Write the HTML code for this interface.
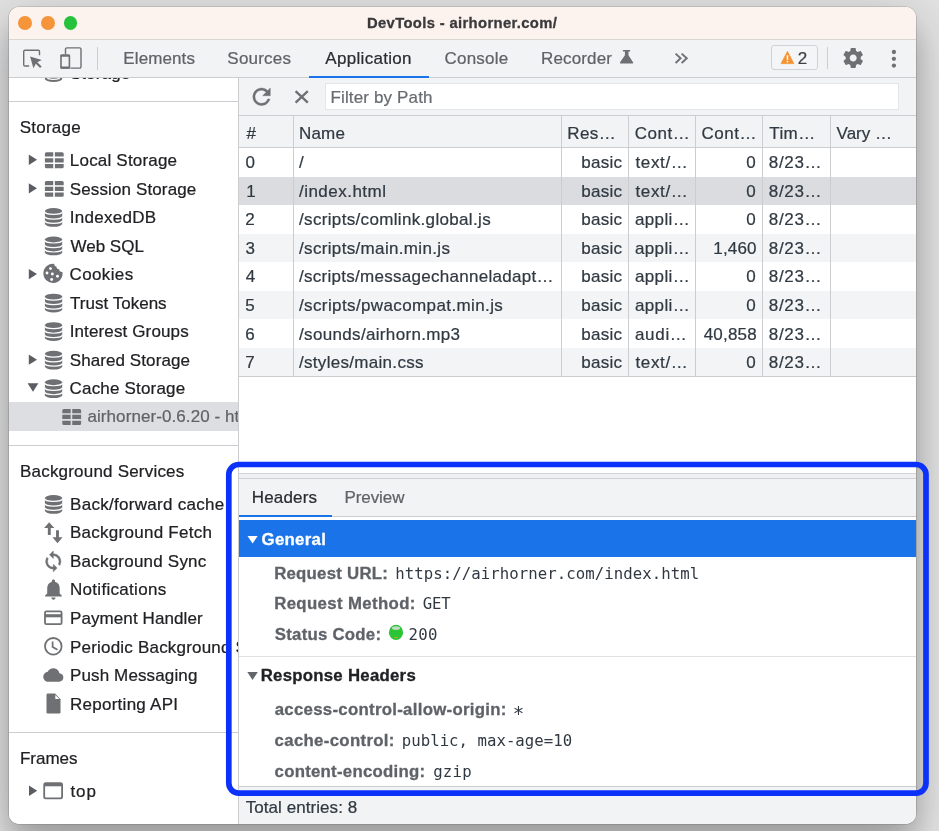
<!DOCTYPE html>
<html lang="en">
<head>
<meta charset="utf-8">
<title>DevTools - airhorner.com/</title>
<style>
html,body{margin:0;padding:0;}
body{width:939px;height:831px;overflow:hidden;position:relative;background:#dcdcdc;
  font-family:"Liberation Sans",sans-serif;}
#bg{position:absolute;left:0;top:0;width:939px;height:831px;
  background:#e2e2e2;}
#win{will-change:transform;position:absolute;left:9px;top:7px;width:907px;height:817px;border-radius:10px;background:#fff;
  box-shadow:0 0 0 0.6px rgba(0,0,0,.22),0 14px 50px rgba(0,0,0,.25),0 22px 24px rgba(0,0,0,.14);overflow:hidden;}
#win div{position:absolute;box-sizing:border-box;}
.t{position:absolute;white-space:pre;line-height:20px;-webkit-text-stroke:0.22px currentColor;}
.s{font-family:"Liberation Sans",sans-serif;}
.b{font-weight:bold;-webkit-text-stroke-width:0.3px;}
.m{font-family:"DejaVu Sans Mono","Liberation Mono",monospace;-webkit-text-stroke-width:0;}
svg{position:absolute;overflow:visible;}
</style>
</head>
<body>
<div id="bg"></div>
<div id="win">
<div  style="left:0.00px;top:0.00px;width:907.00px;height:32.50px;background:#fcf3ef;border-bottom:1px solid #d9d6d4;"></div>
<div  style="left:9.15px;top:9.25px;width:13.90px;height:13.90px;background:#f6943a;border-radius:50%;"></div>
<div  style="left:31.95px;top:9.25px;width:13.90px;height:13.90px;background:#f6943a;border-radius:50%;"></div>
<div  style="left:54.60px;top:9.25px;width:13.90px;height:13.90px;background:#27c23c;border-radius:50%;"></div>
<span class="t s b" style="left:358.00px;top:6.00px;font-size:14.8px;letter-spacing:0.348px;color:#3a3a3c;">DevTools - airhorner.com/</span>
<div  style="left:0.00px;top:32.50px;width:907.00px;height:38.50px;background:#f1f3f4;border-bottom:1px solid #cbcdd1;"></div>
<div  style="left:88.40px;top:40.40px;width:1.00px;height:22.20px;background:#cbcdd1;"></div>
<span class="t s" style="left:114.33px;top:41.50px;font-size:17.0px;letter-spacing:0.104px;color:#5f6368;">Elements</span>
<span class="t s" style="left:218.35px;top:41.50px;font-size:17.0px;letter-spacing:0.200px;color:#5f6368;">Sources</span>
<span class="t s" style="left:316.30px;top:41.50px;font-size:17.0px;letter-spacing:0.307px;color:#2a2c30;">Application</span>
<span class="t s" style="left:435.43px;top:41.50px;font-size:17.0px;letter-spacing:0.242px;color:#5f6368;">Console</span>
<span class="t s" style="left:532.12px;top:41.50px;font-size:17.0px;letter-spacing:0.121px;color:#5f6368;">Recorder</span>
<div  style="left:299.70px;top:68.60px;width:120.20px;height:2.40px;background:#1a73e8;"></div>
<div  style="left:762.40px;top:38.40px;width:46.60px;height:25.00px;border:1px solid #d0d2d5;border-radius:3px;background:#f4f5f6;"></div>
<span class="t s" style="left:788.83px;top:41.50px;font-size:17.0px;letter-spacing:0.200px;color:#3c4043;">2</span>
<div  style="left:817.80px;top:40.20px;width:1.00px;height:21.40px;background:#cbcdd1;"></div>
<div id="side" style="left:0;top:71px;width:229.9px;height:746px;overflow:hidden;background:#fff;">
<span class="t s" style="left:60.65px;top:-14.50px;font-size:17.0px;letter-spacing:0.200px;color:#202124;">Storage</span>
<div  style="left:0.00px;top:23.00px;width:230.00px;height:1.00px;background:#cbcdd1;"></div>
<span class="t s" style="left:10.65px;top:39.50px;font-size:17.0px;letter-spacing:0.246px;color:#202124;">Storage</span>
<div  style="left:0.00px;top:324.20px;width:230.00px;height:28.60px;background:#dcdee2;"></div>
<span class="t s" style="left:60.83px;top:72.50px;font-size:17.0px;letter-spacing:0.194px;color:#202124;">Local Storage</span>
<span class="t s" style="left:60.75px;top:101.50px;font-size:17.0px;letter-spacing:0.125px;color:#202124;">Session Storage</span>
<span class="t s" style="left:60.70px;top:129.50px;font-size:17.0px;letter-spacing:0.281px;color:#202124;">IndexedDB</span>
<span class="t s" style="left:61.38px;top:158.50px;font-size:17.0px;letter-spacing:0.029px;color:#202124;">Web SQL</span>
<span class="t s" style="left:60.62px;top:186.50px;font-size:17.0px;letter-spacing:0.354px;color:#202124;">Cookies</span>
<span class="t s" style="left:61.12px;top:215.50px;font-size:17.0px;letter-spacing:0.011px;color:#202124;">Trust Tokens</span>
<span class="t s" style="left:60.70px;top:243.50px;font-size:17.0px;letter-spacing:0.129px;color:#202124;">Interest Groups</span>
<span class="t s" style="left:60.75px;top:272.50px;font-size:17.0px;letter-spacing:0.083px;color:#202124;">Shared Storage</span>
<span class="t s" style="left:60.62px;top:300.50px;font-size:17.0px;letter-spacing:0.177px;color:#202124;">Cache Storage</span>
<span class="t s" style="left:78.45px;top:328.50px;font-size:17.0px;letter-spacing:0.083px;color:#5f6368;">airhorner-0.6.20 - https://airhorner.com</span>
<div  style="left:0.00px;top:367.00px;width:230.00px;height:1.00px;background:#cbcdd1;"></div>
<span class="t s" style="left:11.02px;top:383.50px;font-size:17.0px;letter-spacing:0.199px;color:#202124;">Background Services</span>
<span class="t s" style="left:61.03px;top:416.50px;font-size:17.0px;letter-spacing:0.291px;color:#202124;">Back/forward cache</span>
<span class="t s" style="left:61.03px;top:444.50px;font-size:17.0px;letter-spacing:0.260px;color:#202124;">Background Fetch</span>
<span class="t s" style="left:61.03px;top:473.50px;font-size:17.0px;letter-spacing:0.216px;color:#202124;">Background Sync</span>
<span class="t s" style="left:61.03px;top:501.50px;font-size:17.0px;letter-spacing:0.298px;color:#202124;">Notifications</span>
<span class="t s" style="left:61.03px;top:530.50px;font-size:17.0px;letter-spacing:0.089px;color:#202124;">Payment Handler</span>
<span class="t s" style="left:61.03px;top:559.50px;font-size:17.0px;letter-spacing:0.200px;color:#202124;">Periodic Background Sync</span>
<span class="t s" style="left:61.03px;top:587.50px;font-size:17.0px;letter-spacing:0.127px;color:#202124;">Push Messaging</span>
<span class="t s" style="left:61.03px;top:616.50px;font-size:17.0px;letter-spacing:0.260px;color:#202124;">Reporting API</span>
<div  style="left:0.00px;top:654.00px;width:230.00px;height:1.00px;background:#cbcdd1;"></div>
<span class="t s" style="left:10.93px;top:670.50px;font-size:17.0px;letter-spacing:-0.005px;color:#202124;">Frames</span>
<span class="t s" style="left:61.40px;top:703.50px;font-size:17.0px;letter-spacing:0.912px;color:#202124;">top</span>
</div>
<div  style="left:229.40px;top:71.00px;width:1.00px;height:746.00px;background:#cbcdd1;"></div>
<div  style="left:230.40px;top:71.00px;width:676.60px;height:37.60px;background:#f1f3f4;border-bottom:1px solid #cbcdd1;"></div>
<div  style="left:316.30px;top:75.50px;width:573.30px;height:27.70px;background:#fff;border:1px solid #e3e5e8;"></div>
<span class="t s" style="left:321.43px;top:80.50px;font-size:17.0px;letter-spacing:0.150px;color:#686c71;">Filter by Path</span>
<div  style="left:230.40px;top:108.60px;width:676.60px;height:32.40px;background:#f1f3f4;border-bottom:1px solid #cbcdd1;"></div>
<div  style="left:230.40px;top:169.55px;width:676.60px;height:28.55px;background:#dadce0;"></div>
<div  style="left:230.40px;top:226.65px;width:676.60px;height:28.55px;background:#f2f4f5;"></div>
<div  style="left:230.40px;top:283.75px;width:676.60px;height:28.55px;background:#f2f4f5;"></div>
<div  style="left:230.40px;top:340.85px;width:676.60px;height:28.55px;background:#f2f4f5;"></div>
<div  style="left:230.40px;top:368.90px;width:676.60px;height:1.00px;background:#cbcdd1;"></div>
<div  style="left:283.90px;top:108.60px;width:1.00px;height:260.80px;background:#cbcdd1;"></div>
<div  style="left:552.10px;top:108.60px;width:1.00px;height:260.80px;background:#cbcdd1;"></div>
<div  style="left:619.20px;top:108.60px;width:1.00px;height:260.80px;background:#cbcdd1;"></div>
<div  style="left:686.30px;top:108.60px;width:1.00px;height:260.80px;background:#cbcdd1;"></div>
<div  style="left:753.00px;top:108.60px;width:1.00px;height:260.80px;background:#cbcdd1;"></div>
<div  style="left:820.50px;top:108.60px;width:1.00px;height:260.80px;background:#cbcdd1;"></div>
<span class="t s" style="left:237.60px;top:116.50px;font-size:17.0px;letter-spacing:0.200px;color:#303942;">#</span>
<span class="t s" style="left:289.93px;top:116.50px;font-size:17.0px;letter-spacing:0.200px;color:#303942;">Name</span>
<span class="t s" style="left:558.23px;top:116.50px;font-size:17.0px;letter-spacing:0.392px;color:#303942;">Res…</span>
<span class="t s" style="left:625.83px;top:116.50px;font-size:17.0px;letter-spacing:0.512px;color:#303942;">Cont…</span>
<span class="t s" style="left:692.52px;top:116.50px;font-size:17.0px;letter-spacing:0.513px;color:#303942;">Cont…</span>
<span class="t s" style="left:760.23px;top:116.50px;font-size:17.0px;letter-spacing:0.425px;color:#303942;">Tim…</span>
<span class="t s" style="left:827.58px;top:116.50px;font-size:17.0px;letter-spacing:0.000px;color:#303942;">Vary …</span>
<span class="t s" style="left:236.47px;top:145.50px;font-size:17.0px;letter-spacing:0.200px;color:#303942;">0</span>
<span class="t s" style="left:290.00px;top:145.50px;font-size:17.0px;letter-spacing:0.200px;color:#303942;">/</span>
<span class="t s" style="left:572.17px;top:145.50px;font-size:17.0px;letter-spacing:0.319px;color:#303942;">basic</span>
<span class="t s" style="left:626.45px;top:145.50px;font-size:17.0px;letter-spacing:0.635px;color:#303942;">text/…</span>
<span class="t s" style="left:737.17px;top:145.50px;font-size:17.0px;letter-spacing:0.200px;color:#303942;">0</span>
<span class="t s" style="left:759.85px;top:145.50px;font-size:17.0px;letter-spacing:0.644px;color:#303942;">8/23…</span>
<span class="t s" style="left:237.15px;top:174.50px;font-size:17.0px;letter-spacing:0.200px;color:#303942;">1</span>
<span class="t s" style="left:290.00px;top:174.50px;font-size:17.0px;letter-spacing:0.470px;color:#303942;">/index.html</span>
<span class="t s" style="left:572.17px;top:174.50px;font-size:17.0px;letter-spacing:0.319px;color:#303942;">basic</span>
<span class="t s" style="left:626.45px;top:174.50px;font-size:17.0px;letter-spacing:0.635px;color:#303942;">text/…</span>
<span class="t s" style="left:737.17px;top:174.50px;font-size:17.0px;letter-spacing:0.200px;color:#303942;">0</span>
<span class="t s" style="left:759.85px;top:174.50px;font-size:17.0px;letter-spacing:0.644px;color:#303942;">8/23…</span>
<span class="t s" style="left:236.22px;top:202.50px;font-size:17.0px;letter-spacing:0.200px;color:#303942;">2</span>
<span class="t s" style="left:290.00px;top:202.50px;font-size:17.0px;letter-spacing:0.335px;color:#303942;">/scripts/comlink.global.js</span>
<span class="t s" style="left:572.17px;top:202.50px;font-size:17.0px;letter-spacing:0.319px;color:#303942;">basic</span>
<span class="t s" style="left:625.95px;top:202.50px;font-size:17.0px;letter-spacing:0.385px;color:#303942;">appli…</span>
<span class="t s" style="left:737.17px;top:202.50px;font-size:17.0px;letter-spacing:0.200px;color:#303942;">0</span>
<span class="t s" style="left:759.85px;top:202.50px;font-size:17.0px;letter-spacing:0.644px;color:#303942;">8/23…</span>
<span class="t s" style="left:236.47px;top:231.50px;font-size:17.0px;letter-spacing:0.200px;color:#303942;">3</span>
<span class="t s" style="left:290.00px;top:231.50px;font-size:17.0px;letter-spacing:0.338px;color:#303942;">/scripts/main.min.js</span>
<span class="t s" style="left:572.17px;top:231.50px;font-size:17.0px;letter-spacing:0.319px;color:#303942;">basic</span>
<span class="t s" style="left:625.95px;top:231.50px;font-size:17.0px;letter-spacing:0.385px;color:#303942;">appli…</span>
<span class="t s" style="left:704.25px;top:231.50px;font-size:17.0px;letter-spacing:0.194px;color:#303942;">1,460</span>
<span class="t s" style="left:759.85px;top:231.50px;font-size:17.0px;letter-spacing:0.644px;color:#303942;">8/23…</span>
<span class="t s" style="left:236.72px;top:259.50px;font-size:17.0px;letter-spacing:0.200px;color:#303942;">4</span>
<span class="t s" style="left:290.00px;top:259.50px;font-size:17.0px;letter-spacing:0.283px;color:#303942;">/scripts/messagechanneladapt…</span>
<span class="t s" style="left:572.17px;top:259.50px;font-size:17.0px;letter-spacing:0.319px;color:#303942;">basic</span>
<span class="t s" style="left:625.95px;top:259.50px;font-size:17.0px;letter-spacing:0.385px;color:#303942;">appli…</span>
<span class="t s" style="left:737.17px;top:259.50px;font-size:17.0px;letter-spacing:0.200px;color:#303942;">0</span>
<span class="t s" style="left:759.85px;top:259.50px;font-size:17.0px;letter-spacing:0.644px;color:#303942;">8/23…</span>
<span class="t s" style="left:236.35px;top:288.50px;font-size:17.0px;letter-spacing:0.200px;color:#303942;">5</span>
<span class="t s" style="left:290.00px;top:288.50px;font-size:17.0px;letter-spacing:0.383px;color:#303942;">/scripts/pwacompat.min.js</span>
<span class="t s" style="left:572.17px;top:288.50px;font-size:17.0px;letter-spacing:0.319px;color:#303942;">basic</span>
<span class="t s" style="left:625.95px;top:288.50px;font-size:17.0px;letter-spacing:0.385px;color:#303942;">appli…</span>
<span class="t s" style="left:737.17px;top:288.50px;font-size:17.0px;letter-spacing:0.200px;color:#303942;">0</span>
<span class="t s" style="left:759.85px;top:288.50px;font-size:17.0px;letter-spacing:0.644px;color:#303942;">8/23…</span>
<span class="t s" style="left:236.22px;top:317.50px;font-size:17.0px;letter-spacing:0.200px;color:#303942;">6</span>
<span class="t s" style="left:290.00px;top:317.50px;font-size:17.0px;letter-spacing:0.336px;color:#303942;">/sounds/airhorn.mp3</span>
<span class="t s" style="left:572.17px;top:317.50px;font-size:17.0px;letter-spacing:0.319px;color:#303942;">basic</span>
<span class="t s" style="left:625.95px;top:317.50px;font-size:17.0px;letter-spacing:0.694px;color:#303942;">audi…</span>
<span class="t s" style="left:694.73px;top:317.50px;font-size:17.0px;letter-spacing:0.185px;color:#303942;">40,858</span>
<span class="t s" style="left:759.85px;top:317.50px;font-size:17.0px;letter-spacing:0.644px;color:#303942;">8/23…</span>
<span class="t s" style="left:236.22px;top:345.50px;font-size:17.0px;letter-spacing:0.200px;color:#303942;">7</span>
<span class="t s" style="left:290.00px;top:345.50px;font-size:17.0px;letter-spacing:0.302px;color:#303942;">/styles/main.css</span>
<span class="t s" style="left:572.17px;top:345.50px;font-size:17.0px;letter-spacing:0.319px;color:#303942;">basic</span>
<span class="t s" style="left:626.45px;top:345.50px;font-size:17.0px;letter-spacing:0.635px;color:#303942;">text/…</span>
<span class="t s" style="left:737.17px;top:345.50px;font-size:17.0px;letter-spacing:0.200px;color:#303942;">0</span>
<span class="t s" style="left:759.85px;top:345.50px;font-size:17.0px;letter-spacing:0.644px;color:#303942;">8/23…</span>
<div  style="left:230.40px;top:466.40px;width:676.60px;height:5.60px;background:#eef0f2;border-top:1px solid #d0d2d5;border-bottom:1px solid #cfd1d4;"></div>
<div  style="left:230.40px;top:472.00px;width:676.60px;height:38.00px;background:#f1f3f4;border-bottom:1px solid #cbcdd1;"></div>
<div  style="left:230.40px;top:508.00px;width:92.30px;height:2.00px;background:#1a73e8;"></div>
<span class="t s" style="left:242.82px;top:480.50px;font-size:17.0px;letter-spacing:0.158px;color:#2a2c30;">Headers</span>
<span class="t s" style="left:335.43px;top:480.50px;font-size:17.0px;letter-spacing:-0.075px;color:#5f6368;">Preview</span>
<div  style="left:230.40px;top:513.00px;width:676.60px;height:36.60px;background:#1a73e8;"></div>
<span class="t s b" style="left:252.57px;top:522.50px;font-size:16.8px;letter-spacing:0.299px;color:#fff;">General</span>
<span class="t s b" style="left:265.17px;top:556.50px;font-size:16.8px;letter-spacing:0.253px;color:#5f6368;">Request URL:</span>
<span class="t m" style="left:386.20px;top:556.50px;font-size:15.7px;letter-spacing:0.057px;color:#303942;">https://airhorner.com/index.html</span>
<span class="t s b" style="left:265.17px;top:586.50px;font-size:16.8px;letter-spacing:0.370px;color:#5f6368;">Request Method:</span>
<span class="t m" style="left:413.85px;top:586.50px;font-size:15.7px;letter-spacing:-0.244px;color:#303942;">GET</span>
<span class="t s b" style="left:265.80px;top:617.50px;font-size:16.8px;letter-spacing:0.250px;color:#5f6368;">Status Code:</span>
<span class="t m" style="left:399.38px;top:617.50px;font-size:15.7px;letter-spacing:0.404px;color:#303942;">200</span>
<div  style="left:230.40px;top:649.00px;width:676.60px;height:1.00px;background:#dfe1e4;"></div>
<span class="t s b" style="left:251.67px;top:658.50px;font-size:16.8px;letter-spacing:0.264px;color:#202124;">Response Headers</span>
<span class="t s b" style="left:265.70px;top:692.50px;font-size:16.8px;letter-spacing:0.292px;color:#5f6368;">access-control-allow-origin:</span>
<span class="t m" style="left:503.67px;top:696.00px;font-size:19px;letter-spacing:0.000px;color:#303942;">*</span>
<span class="t s b" style="left:265.57px;top:723.50px;font-size:16.8px;letter-spacing:0.324px;color:#5f6368;">cache-control:</span>
<span class="t m" style="left:392.80px;top:723.50px;font-size:15.7px;letter-spacing:0.017px;color:#303942;">public, max-age=10</span>
<span class="t s b" style="left:265.57px;top:754.50px;font-size:16.8px;letter-spacing:0.256px;color:#5f6368;">content-encoding:</span>
<span class="t m" style="left:424.13px;top:754.50px;font-size:15.7px;letter-spacing:0.263px;color:#303942;">gzip</span>
<div  style="left:230.40px;top:778.50px;width:676.60px;height:38.50px;background:#f1f3f4;border-top:1px solid #cbcdd1;"></div>
<span class="t s" style="left:236.72px;top:790.50px;font-size:17.0px;letter-spacing:0.060px;color:#303942;">Total entries: 8</span>
<svg width="939" height="831" viewBox="0 0 939 831" style="left:-9px;top:-7px;">
<path d="M29.2,66 H25 a1.3,1.3 0 0 1 -1.3,-1.3 V51.5 a1.3,1.3 0 0 1 1.3,-1.3 H38.2 a1.3,1.3 0 0 1 1.3,1.3 V55.2" fill="none" stroke="#6e7073" stroke-width="1.4"/>
<path d="M30.1,56.5 L41.8,59.9 L37.3,62.2 L41.6,66.5 L40.1,68 L35.8,63.7 L33.4,68.2 Z" fill="#6e7073"/>
<path d="M65.5,54.2 V49.2 a1.3,1.3 0 0 1 1.3,-1.3 H79.7 a1.3,1.3 0 0 1 1.3,1.3 V66.8 a1.3,1.3 0 0 1 -1.3,1.3 H70.4" fill="none" stroke="#6e7073" stroke-width="1.4"/>
<rect x="61" y="55.3" width="8.4" height="12.7" rx="1" fill="none" stroke="#6e7073" stroke-width="1.6"/>
<rect x="60.3" y="54.5" width="9.8" height="2.2" rx="0.8" fill="#6e7073"/><rect x="60.3" y="66.6" width="9.8" height="2.2" rx="0.8" fill="#6e7073"/>
<path d="M622.9,49.9 H630.1 V51.5 H628.5 V55.3 L633,62.2 a0.9,0.9 0 0 1 -0.8,1.4 H620.9 a0.9,0.9 0 0 1 -0.8,-1.4 L624.9,55.3 V51.5 H622.9 Z" fill="#6e7073"/>
<path d="M675.6,53.6 L680.6,58.3 L675.6,63 M681.6,53.6 L686.8,58.3 L681.6,63" fill="none" stroke="#6e7073" stroke-width="1.9"/>
<path d="M787.45,51.4 L793.8,63.6 H781.1 Z" fill="#f59331" stroke="#f59331" stroke-width="0.8" stroke-linejoin="round"/>
<rect x="786.7" y="55.2" width="1.5" height="4.6" fill="#fff"/><rect x="786.7" y="60.8" width="1.5" height="1.6" fill="#fff"/>
<g transform="translate(841.2,46)"><path fill="#6e7073" d="M19.43 12.98c.04-.32.07-.64.07-.98s-.03-.66-.07-.98l2.11-1.65c.19-.15.24-.42.12-.64l-2-3.46c-.12-.22-.39-.3-.61-.22l-2.49 1c-.52-.4-1.08-.73-1.69-.98l-.38-2.65C14.46 2.18 14.25 2 14 2h-4c-.25 0-.46.18-.49.42l-.38 2.65c-.61.25-1.17.59-1.69.98l-2.49-1c-.23-.09-.49 0-.61.22l-2 3.46c-.13.22-.07.49.12.64l2.11 1.65c-.04.32-.07.65-.07.98s.03.66.07.98l-2.11 1.65c-.19.15-.24.42-.12.64l2 3.46c.12.22.39.3.61.22l2.49-1c.52.4 1.08.73 1.69.98l.38 2.65c.03.24.24.42.49.42h4c.25 0 .46-.18.49-.42l.38-2.65c.61-.25 1.17-.59 1.69-.98l2.49 1c.23.09.49 0 .61-.22l2-3.46c.12-.22.07-.49-.12-.64l-2.11-1.65zM12 15.5c-1.93 0-3.5-1.57-3.5-3.5s1.570-3.5 3.5-3.5 3.5 1.570 3.5 3.500-1.570 3.500-3.500 3.500z"/></g>
<circle cx="893.9" cy="52" r="2.15" fill="#6e7073"/>
<circle cx="893.9" cy="58.8" r="2.15" fill="#6e7073"/>
<circle cx="893.9" cy="65.6" r="2.15" fill="#6e7073"/>
<g transform="translate(248.5,83.7) scale(1.09)"><path fill="#6e7073" stroke="#6e7073" stroke-width="0.35" d="M17.65 6.35C16.2 4.9 14.21 4 12 4c-4.42 0-7.990 3.580-7.990 8s3.570 8 7.990 8c3.730 0 6.840-2.550 7.730-6h-2.080c-.820 2.330-3.040 4-5.650 4-3.310 0-6-2.690-6-6s2.690-6 6-6c1.660 0 3.140.690 4.220 1.780L13 11h7V4l-2.350 2.350z"/></g>
<path d="M295.6,91.1 L307.8,102.7 M307.8,91.1 L295.6,102.7" stroke="#6e7073" stroke-width="2.3" fill="none"/>
<path d="M44.9,78 V79.05 A8.65,2.9 0 0 0 62.2,79.05 V78 Z" fill="#6e7073"/><path d="M47.3,78.3 A8.95,2.9 0 0 0 59.8,78.3" fill="none" stroke="#fff" stroke-width="1.3"/>
<path d="M28.8,154.60000000000002 L37.0,159.8 L28.8,165.0 Z" fill="#5a5d63"/>
<rect x="44.90" y="152.35" width="18.8" height="15.9" rx="1.5" fill="#6e7073"/>
<path d="M54.05,151.85 V168.75 M44.40,157.40 H64.20 M44.40,163.20 H64.20" stroke="#fff" stroke-width="1.6" fill="none"/>
<path d="M28.8,183.15000000000003 L37.0,188.35000000000002 L28.8,193.55 Z" fill="#5a5d63"/>
<rect x="44.90" y="180.90" width="18.8" height="15.9" rx="1.5" fill="#6e7073"/>
<path d="M54.05,180.40 V197.30 M44.40,185.95 H64.20 M44.40,191.75 H64.20" stroke="#fff" stroke-width="1.6" fill="none"/>
<g>
<path d="M44.9,210.95000000000002 A8.65,2.9 0 0 1 62.2,210.95000000000002 V223.85 A8.65,2.9 0 0 1 44.9,223.85 Z" fill="#6e7073"/>
<path d="M44.6,211.55 A8.950000000000001,2.9 0 0 0 62.5,211.55" fill="none" stroke="#fff" stroke-width="1.2"/>
<path d="M44.6,216.15 A8.950000000000001,2.9 0 0 0 62.5,216.15" fill="none" stroke="#fff" stroke-width="1.2"/>
<path d="M44.6,220.55 A8.950000000000001,2.9 0 0 0 62.5,220.55" fill="none" stroke="#fff" stroke-width="1.2"/>
</g>
<g>
<path d="M44.9,239.50000000000003 A8.65,2.9 0 0 1 62.2,239.50000000000003 V252.4 A8.65,2.9 0 0 1 44.9,252.4 Z" fill="#6e7073"/>
<path d="M44.6,240.10000000000002 A8.950000000000001,2.9 0 0 0 62.5,240.10000000000002" fill="none" stroke="#fff" stroke-width="1.2"/>
<path d="M44.6,244.70000000000002 A8.950000000000001,2.9 0 0 0 62.5,244.70000000000002" fill="none" stroke="#fff" stroke-width="1.2"/>
<path d="M44.6,249.10000000000002 A8.950000000000001,2.9 0 0 0 62.5,249.10000000000002" fill="none" stroke="#fff" stroke-width="1.2"/>
</g>
<path d="M28.8,268.90000000000003 L37.0,274.1 L28.8,279.3 Z" fill="#5a5d63"/>
<path d="M54.2,263.9 A9.6,9.6 0 1 0 62.45,271.9 Q59.3,272.1 59.1,269.2 Q56.5,269.2 56.4,266.6 Q54.2,266.5 54.2,263.9 Z" fill="#6e7073"/>
<circle cx="50.5" cy="268.6" r="1.45" fill="#fff"/>
<circle cx="47" cy="273" r="1.45" fill="#fff"/>
<circle cx="52.35" cy="274" r="1.45" fill="#fff"/>
<circle cx="57.5" cy="276.2" r="1.45" fill="#fff"/>
<circle cx="51.65" cy="279.5" r="1.45" fill="#fff"/>
<g>
<path d="M44.9,296.6 A8.65,2.9 0 0 1 62.2,296.6 V309.5 A8.65,2.9 0 0 1 44.9,309.5 Z" fill="#6e7073"/>
<path d="M44.6,297.20000000000005 A8.950000000000001,2.9 0 0 0 62.5,297.20000000000005" fill="none" stroke="#fff" stroke-width="1.2"/>
<path d="M44.6,301.8 A8.950000000000001,2.9 0 0 0 62.5,301.8" fill="none" stroke="#fff" stroke-width="1.2"/>
<path d="M44.6,306.20000000000005 A8.950000000000001,2.9 0 0 0 62.5,306.20000000000005" fill="none" stroke="#fff" stroke-width="1.2"/>
</g>
<g>
<path d="M44.9,325.15000000000003 A8.65,2.9 0 0 1 62.2,325.15000000000003 V338.05 A8.65,2.9 0 0 1 44.9,338.05 Z" fill="#6e7073"/>
<path d="M44.6,325.75000000000006 A8.950000000000001,2.9 0 0 0 62.5,325.75000000000006" fill="none" stroke="#fff" stroke-width="1.2"/>
<path d="M44.6,330.35 A8.950000000000001,2.9 0 0 0 62.5,330.35" fill="none" stroke="#fff" stroke-width="1.2"/>
<path d="M44.6,334.75000000000006 A8.950000000000001,2.9 0 0 0 62.5,334.75000000000006" fill="none" stroke="#fff" stroke-width="1.2"/>
</g>
<path d="M28.8,354.45 L37.0,359.65 L28.8,364.84999999999997 Z" fill="#5a5d63"/>
<g>
<path d="M44.9,353.7 A8.65,2.9 0 0 1 62.2,353.7 V366.59999999999997 A8.65,2.9 0 0 1 44.9,366.59999999999997 Z" fill="#6e7073"/>
<path d="M44.6,354.3 A8.950000000000001,2.9 0 0 0 62.5,354.3" fill="none" stroke="#fff" stroke-width="1.2"/>
<path d="M44.6,358.9 A8.950000000000001,2.9 0 0 0 62.5,358.9" fill="none" stroke="#fff" stroke-width="1.2"/>
<path d="M44.6,363.3 A8.950000000000001,2.9 0 0 0 62.5,363.3" fill="none" stroke="#fff" stroke-width="1.2"/>
</g>
<path d="M27.6,383.30000000000007 H38.400000000000006 L33.0,391.70000000000005 Z" fill="#5a5d63"/>
<g>
<path d="M44.9,382.25000000000006 A8.65,2.9 0 0 1 62.2,382.25000000000006 V395.15000000000003 A8.65,2.9 0 0 1 44.9,395.15000000000003 Z" fill="#6e7073"/>
<path d="M44.6,382.8500000000001 A8.950000000000001,2.9 0 0 0 62.5,382.8500000000001" fill="none" stroke="#fff" stroke-width="1.2"/>
<path d="M44.6,387.45000000000005 A8.950000000000001,2.9 0 0 0 62.5,387.45000000000005" fill="none" stroke="#fff" stroke-width="1.2"/>
<path d="M44.6,391.8500000000001 A8.950000000000001,2.9 0 0 0 62.5,391.8500000000001" fill="none" stroke="#fff" stroke-width="1.2"/>
</g>
<rect x="62.30" y="409.00" width="18.8" height="15.9" rx="1.5" fill="#6e7073"/>
<path d="M71.45,408.50 V425.40 M61.80,414.05 H81.60 M61.80,419.85 H81.60" stroke="#dcdee2" stroke-width="1.6" fill="none"/>
<g>
<path d="M44.9,497.95 A8.65,2.9 0 0 1 62.2,497.95 V510.84999999999997 A8.65,2.9 0 0 1 44.9,510.84999999999997 Z" fill="#6e7073"/>
<path d="M44.6,498.55 A8.950000000000001,2.9 0 0 0 62.5,498.55" fill="none" stroke="#fff" stroke-width="1.2"/>
<path d="M44.6,503.15 A8.950000000000001,2.9 0 0 0 62.5,503.15" fill="none" stroke="#fff" stroke-width="1.2"/>
<path d="M44.6,507.55 A8.950000000000001,2.9 0 0 0 62.5,507.55" fill="none" stroke="#fff" stroke-width="1.2"/>
</g>
<path d="M49.2,522.2499999999999 L54.3,528.05 H50.75 V534.9499999999999 H47.85 V528.05 H44.1 Z M57.5,543.15 L52.5,537.3499999999999 H56.05 V530.15 H58.95 V537.3499999999999 H62.5 Z" fill="#6e7073"/>
<g transform="translate(41.9,550.0) scale(0.95)"><path fill="#6e7073" stroke="#6e7073" stroke-width="0.5" stroke-linejoin="round" d="M12 4V1L8 5l4 4V6c3.310 0 6 2.690 6 6 0 1.010-.250 1.970-.700 2.800l1.460 1.460C19.540 15.030 20 13.570 20 12c0-4.420-3.580-8-8-8zm0 14c-3.310 0-6-2.690-6-6 0-1.010.250-1.970.700-2.800L5.240 7.740C4.460 8.970 4 10.430 4 12c0 4.420 3.580 8 8 8v3l4-4-4-4v3z"/></g>
<g transform="translate(40.97,576.8) scale(1.04)"><path fill="#6e7073" d="M12 22c1.100 0 2-.900 2-2h-4c0 1.100.890 2 2 2zm6-6v-5c0-3.070-1.640-5.640-4.500-6.320V4c0-.830-.670-1.500-1.500-1.500s-1.500.670-1.500 1.500v.680C7.630 5.360 6 7.920 6 11v5l-2 2v1h16v-1l-2-2z"/></g>
<rect x="45" y="611.3" width="16.6" height="12.9" rx="1.4" fill="none" stroke="#6e7073" stroke-width="1.8"/><rect x="44.8" y="614.2" width="17" height="3.1" fill="#6e7073"/>
<circle cx="53.3" cy="646.3" r="8.3" fill="none" stroke="#6e7073" stroke-width="1.8"/><path d="M52.6,641.6 V646.9 L57.5,649.7" fill="none" stroke="#6e7073" stroke-width="1.7"/>
<g transform="translate(43.25,664.948) scale(0.838)"><path fill="#6e7073" d="M19.350 10.040C18.670 6.590 15.640 4 12 4 9.110 4 6.600 5.640 5.350 8.040 2.340 8.360 0 10.910 0 14c0 3.310 2.690 6 6 6h13c2.760 0 5-2.240 5-5 0-2.640-2.050-4.780-4.650-4.960z"/></g>
<path d="M47.9,693.6 H55 L60.5,699.3 V712.2 a1.4,1.4 0 0 1 -1.4,1.4 H47.9 a1.4,1.4 0 0 1 -1.4,-1.4 V695 a1.4,1.4 0 0 1 1.400,-1.400 Z" fill="#6e7073"/><path d="M55.3,694.9 V699 H59.4 Z" fill="#fff"/>
<rect x="44.2" y="783.1" width="17.9" height="15.2" rx="1.6" fill="none" stroke="#6e7073" stroke-width="1.8"/><rect x="44.2" y="783.1" width="17.9" height="3.2" fill="#6e7073"/>
<path d="M29,785.5999999999999 L37.2,790.8 L29,796.0 Z" fill="#5a5d63"/>
<path d="M247.5,535.9 H257.7 L252.6,543.6 Z" fill="#fff"/>
<path d="M247.3,671.9 H257.8 L252.55,680 Z" fill="#63666b"/>
<ellipse cx="396" cy="632.4" rx="7.1" ry="7.6" fill="#2cc537"/>
<ellipse cx="396" cy="628.1" rx="4.1" ry="1.9" fill="#d9dedb" opacity="0.85"/>
<ellipse cx="396" cy="637.5" rx="2.2" ry="0.7" fill="#e3a21c" opacity="0.75"/>
</svg>
</div>
<svg width="939" height="831" viewBox="0 0 939 831" style="left:0;top:0;"><rect x="228.8" y="464.5" width="697.2" height="328.6" rx="10" ry="10" fill="none" stroke="#0c32fa" stroke-width="5.7"/></svg>
</body>
</html>
